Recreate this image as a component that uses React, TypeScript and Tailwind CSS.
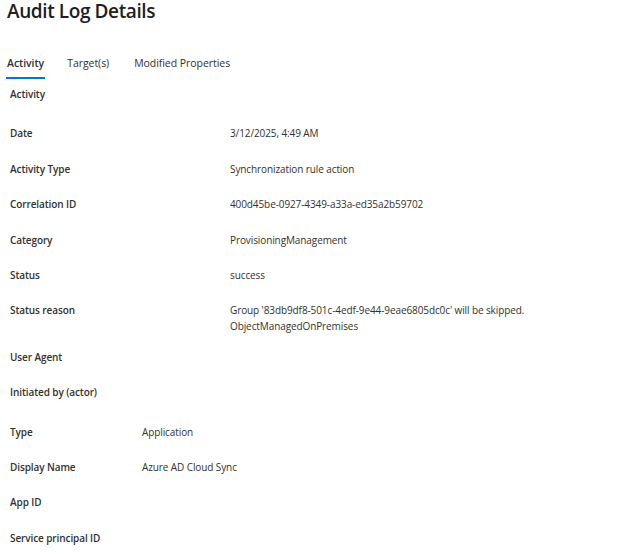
const activityRows: { label: string; value: string[]; h: string }[] = [
  { label: 'Date', value: ['3/12/2025, 4:49 AM'], h: 'h-[36px]' },
  { label: 'Activity Type', value: ['Synchronization rule action'], h: 'h-[35px]' },
  { label: 'Correlation ID', value: ['400d45be-0927-4349-a33a-ed35a2b59702'], h: 'h-[36px]' },
  { label: 'Category', value: ['ProvisioningManagement'], h: 'h-[35px]' },
  { label: 'Status', value: ['success'], h: 'h-[35px]' },
  {
    label: 'Status reason',
    value: [
      "Group '83db9df8-501c-4edf-9e44-9eae6805dc0c' will be skipped.",
      'ObjectManagedOnPremises',
    ],
    h: 'h-[47px]',
  },
  { label: 'User Agent', value: [], h: 'h-[35px]' },
];

const actorRows: { label: string; value: string; h: string }[] = [
  { label: 'Type', value: 'Application', h: 'h-[35px]' },
  { label: 'Display Name', value: 'Azure AD Cloud Sync', h: 'h-[35px]' },
  { label: 'App ID', value: '', h: 'h-[36px]' },
  { label: 'Service principal ID', value: '', h: 'h-[16px]' },
];

const tabs = ['Activity', 'Target(s)', 'Modified Properties'];

export default function App() {
  return (
    <div
      className="w-[624px] h-[556px] overflow-hidden bg-white text-[#323130]"
      style={{ fontFamily: '"Open Sans", "Noto Sans", sans-serif' }}
    >
      <h1 className="pl-[7px] text-[19px] leading-[22px] tracking-[-0.4px] font-semibold text-[#201f1e]">
        Audit Log Details
      </h1>

      <div className="mt-[33px] flex pl-[6px] text-[10.5px] leading-[16px] tracking-[-0.05px]">
        {tabs.map((t, i) => (
          <div
            key={t}
            className={
              i === 0
                ? 'mr-[22px] px-[1px] pb-[6px] font-semibold border-b-2 border-[#0078d4]'
                : i === 1
                  ? 'mr-[25px] pb-[8px]'
                  : 'pb-[8px]'
            }
          >
            {t}
          </div>
        ))}
      </div>

      <div className="pl-[10px] text-[10px] leading-[16px] tracking-[-0.1px]">
        <div className="mt-[7px] h-[16px] font-semibold">Activity</div>

        <div className="mt-[23px]">
          {activityRows.map((r) => (
            <div key={r.label} className={`flex ${r.h}`}>
              <div className="w-[220px] shrink-0 font-semibold">{r.label}</div>
              <div>
                {r.value.map((v) => (
                  <div key={v}>{v}</div>
                ))}
              </div>
            </div>
          ))}
          <div className="h-[16px] font-semibold">Initiated by (actor)</div>
        </div>

        <div className="mt-[24px]">
          {actorRows.map((r) => (
            <div key={r.label} className={`flex ${r.h}`}>
              <div className="w-[132px] shrink-0 font-semibold">{r.label}</div>
              <div>{r.value}</div>
            </div>
          ))}
        </div>
      </div>
    </div>
  );
}
